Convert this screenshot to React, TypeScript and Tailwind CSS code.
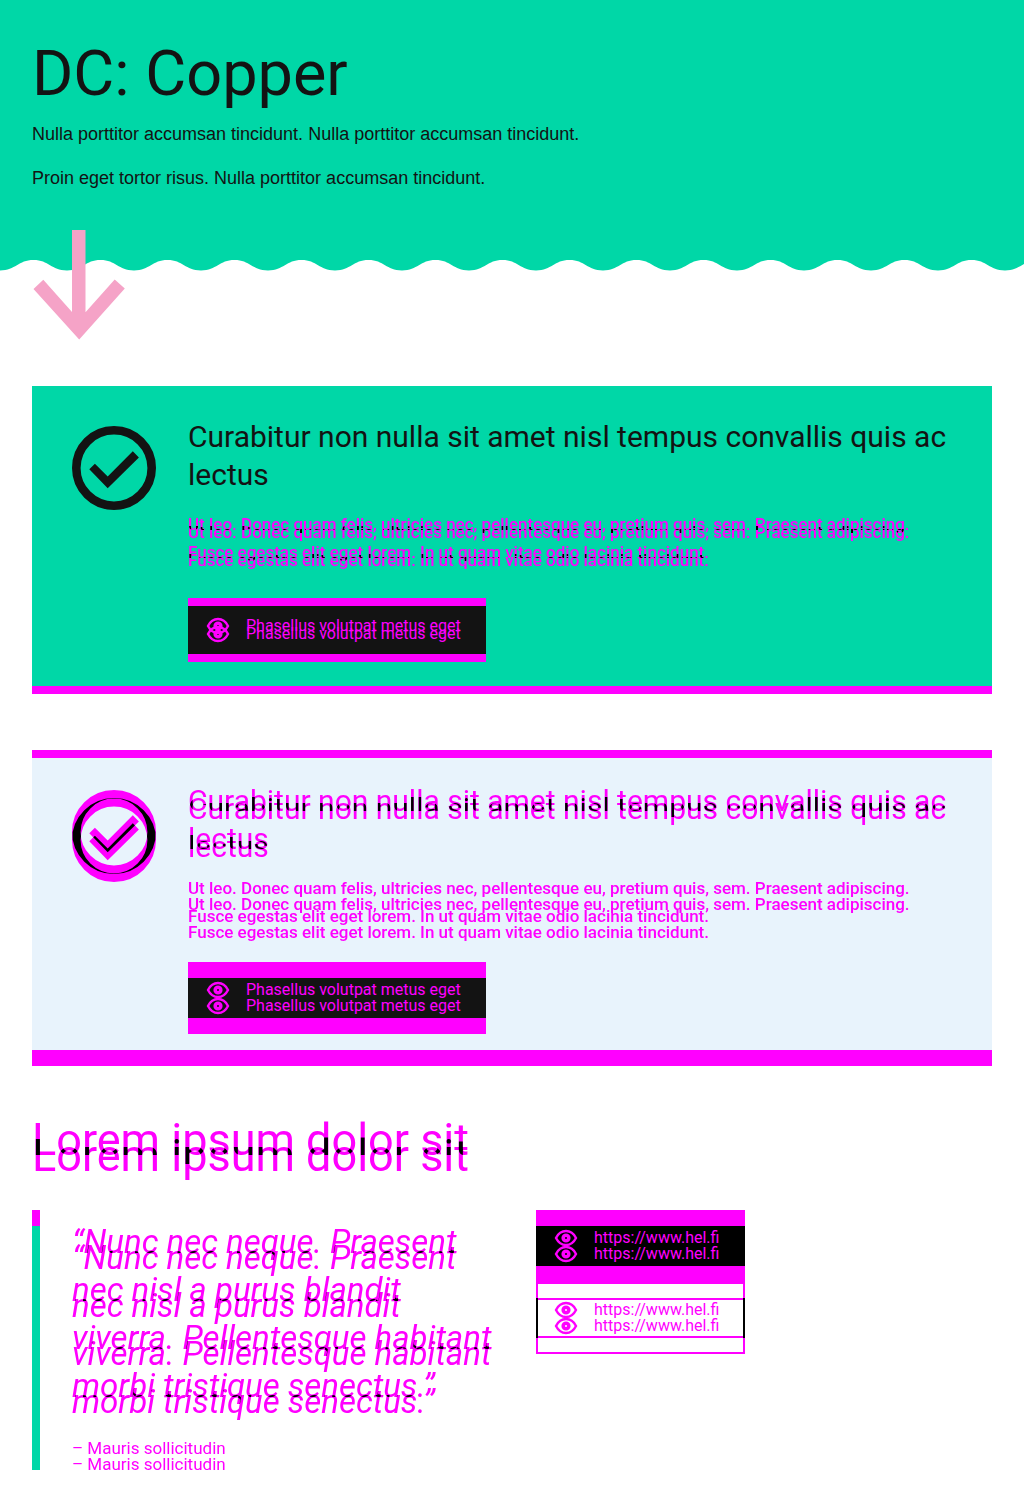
import React, { ReactNode } from "react";

/** Draws its children twice, the second copy lower by 8 or 16 pixels; the parts that both copies cover turn black unless solid. */
function Doubled({ shift, solid = false, children }: { shift: 8 | 16; solid?: boolean; children: ReactNode }) {
  return (
    <span className={`relative isolate block text-[#ff00ff] ${shift === 8 ? "pb-2" : "pb-4"}`}>
      <span className="block">{children}</span>
      <span
        aria-hidden="true"
        className={`absolute left-0 block w-full ${solid ? "" : "mix-blend-difference"} ${shift === 8 ? "top-2" : "top-4"}`}
      >
        {children}
      </span>
    </span>
  );
}

function EyeIcon() {
  return (
    <svg viewBox="0 0 24 24" className="size-6 shrink-0" fill="none" stroke="currentColor" aria-hidden="true">
      <path d="M2 12C4.500 7 8 5 12 5s7.500 2 10 7c-2.500 5-6 7-10 7S4.500 17 2 12Z" strokeWidth="2.400" />
      <circle cx="12" cy="12" r="2.800" strokeWidth="3.600" />
    </svg>
  );
}

function CheckIcon() {
  return (
    <svg viewBox="0 0 84 84" className="block size-[84px]" aria-hidden="true">
      <circle cx="42" cy="42" r="37.700" fill="none" stroke="currentColor" strokeWidth="8.600" />
      <path d="M17.300 43.300L22.900 37.700L35.700 50.500L60.800 25.300L66.900 31.500L35.700 62.300Z" fill="currentColor" />
    </svg>
  );
}

function LinkLabel({ shift, children }: { shift: 8 | 16; children: ReactNode }) {
  return (
    <Doubled shift={shift} solid>
      <span className="flex items-center gap-4 text-[16px] leading-6 whitespace-nowrap">
        <EyeIcon />
        <span>{children}</span>
      </span>
    </Doubled>
  );
}

const cardTitle = "Curabitur non nulla sit amet nisl tempus convallis quis ac lectus";
const cardLink = "Phasellus volutpat metus eget";

function CardText() {
  return (
    <>
      Ut leo. Donec quam felis, ultricies nec, pellentesque eu, pretium quis, sem. Praesent adipiscing.
      <br />
      Fusce egestas elit eget lorem. In ut quam vitae odio lacinia tincidunt.
    </>
  );
}

export default function App() {
  return (
    <div className="bg-white pb-4 font-[Roboto,sans-serif] text-[#131313]">
      <header className="relative">
        <div className="bg-[#00d7a7] px-8 pt-[38px] pb-[68px]">
          <h1 className="text-[63px] leading-[72px]">DC: Copper</h1>
          <div className="mt-[10px] font-['Liberation_Sans',Arial,sans-serif] text-[18px] leading-7">
            <p>Nulla porttitor accumsan tincidunt. Nulla porttitor accumsan tincidunt.</p>
            <p className="mt-4">Proin eget tortor risus. Nulla porttitor accumsan tincidunt.</p>
          </div>
        </div>
        <svg className="block h-[11px] w-full" aria-hidden="true">
          <defs>
            <pattern id="wave" width="67" height="11" patternUnits="userSpaceOnUse">
              <path d="M0 0H67V10.400C51 10.400 49 0 33.500 0S16 10.400 0 10.400Z" fill="#00d7a7" />
            </pattern>
          </defs>
          <rect width="100%" height="11" fill="url(#wave)" />
        </svg>
        <svg viewBox="0 0 94 110" className="absolute top-[230px] left-8 h-[110px] w-[94px]" aria-hidden="true">
          <path
            d="M40 0H53.500V82.300L82.700 49.600L92.800 58.500L47.200 109.500L1.500 58.900L11.300 49.700L40 82Z"
            fill="#f5a3c7"
          />
        </svg>
      </header>

      <main className="px-8 pt-[115px]">
        <section className="flex gap-8 border-b-8 border-[#ff00ff] bg-[#00d7a7] px-10 pt-8 pb-6">
          <div className="mt-2 shrink-0">
            <CheckIcon />
          </div>
          <div className="min-w-0 flex-1">
            <h2 className="-mr-2 text-[30px] leading-[38px]">{cardTitle}</h2>
            <div className="mt-4 text-[17px] leading-7 font-medium">
              <Doubled shift={8}>
                <CardText />
              </Doubled>
            </div>
            <a
              href="#phasellus"
              className="mt-6 block w-fit min-w-[298px] border-y-8 border-[#ff00ff] bg-[#131313] px-[18px] py-2"
            >
              <LinkLabel shift={8}>{cardLink}</LinkLabel>
            </a>
          </div>
        </section>

        <section className="mt-14 flex gap-8 border-t-8 border-b-16 border-[#ff00ff] bg-[#e8f3fc] px-10 pt-6 pb-4">
          <div className="mt-2 shrink-0">
            <Doubled shift={8}>
              <CheckIcon />
            </Doubled>
          </div>
          <div className="min-w-0 flex-1">
            <h2 className="-mr-2 text-[30px] leading-[38px]">
              <Doubled shift={8}>{cardTitle}</Doubled>
            </h2>
            <div className="mt-2 text-[17px] leading-7 font-medium">
              <Doubled shift={16}>
                <CardText />
              </Doubled>
            </div>
            <a
              href="#phasellus-2"
              className="mt-4 block w-fit min-w-[298px] border-y-16 border-[#ff00ff] bg-[#131313] px-[18px]"
            >
              <LinkLabel shift={16}>{cardLink}</LinkLabel>
            </a>
          </div>
        </section>

        <h2 className="mt-11 text-[45px] leading-[60px]">
          <Doubled shift={16}>Lorem ipsum dolor sit</Doubled>
        </h2>

        <div className="mt-6 grid grid-cols-2 items-start gap-12">
          <figure className="flex gap-8">
            <div className="flex w-2 shrink-0 flex-col">
              <div className="h-4 bg-[#ff00ff]" />
              <div className="flex-1 bg-[#00d7a7]" />
            </div>
            <div className="min-w-0 flex-1 pt-2">
              <blockquote className="text-[33px] leading-[48px] whitespace-nowrap italic">
                <Doubled shift={16}>
                  “Nunc nec neque. Praesent
                  <br />
                  nec nisl a purus blandit
                  <br />
                  viverra. Pellentesque habitant
                  <br />
                  morbi tristique senectus.”
                </Doubled>
              </blockquote>
              <figcaption className="mt-3 -mb-1 text-[17px] leading-5">
                <Doubled shift={16}>– Mauris sollicitudin</Doubled>
              </figcaption>
            </div>
          </figure>

          <div className="flex w-fit min-w-[209px] flex-col">
            <a href="https://www.hel.fi" className="block border-y-16 border-[#ff00ff] bg-black px-[18px]">
              <LinkLabel shift={16}>https://www.hel.fi</LinkLabel>
            </a>
            <a href="https://www.hel.fi" className="block border-y-2 border-[#ff00ff]">
              <span className="block h-3.5 border-x-2 border-[#ff00ff]" />
              <span className="block border-x-2 border-black">
                <span className="block border-y-2 border-[#ff00ff] px-4">
                  <span className="-my-0.5 block">
                    <LinkLabel shift={16}>https://www.hel.fi</LinkLabel>
                  </span>
                </span>
              </span>
              <span className="block h-3.5 border-x-2 border-[#ff00ff]" />
            </a>
          </div>
        </div>
      </main>
    </div>
  );
}
